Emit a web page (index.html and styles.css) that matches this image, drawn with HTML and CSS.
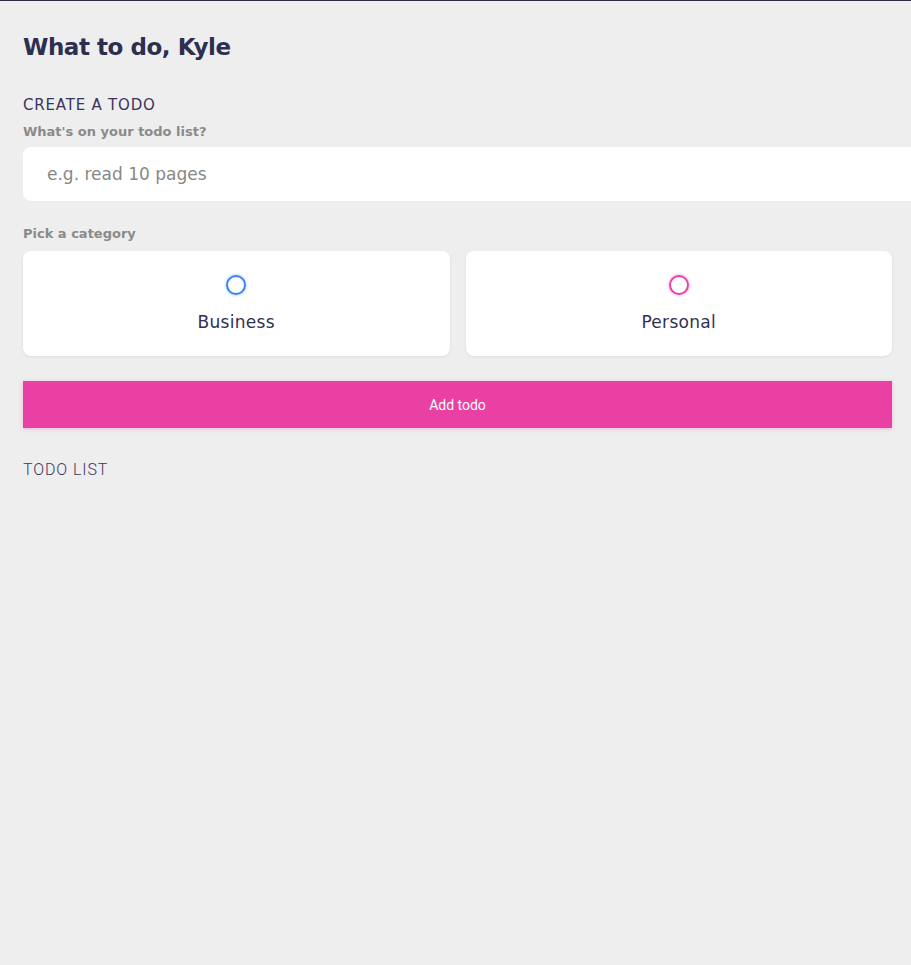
FILE: index.html
```html
<!DOCTYPE html>
<html>
<head>
<meta charset="utf-8">
<link rel="stylesheet" href="styles.css">
</head>
<body>
<main class="app">
  <h1 class="greeting">What to do, Kyle</h1>
  <section class="create">
    <h2 class="section-title">CREATE A TODO</h2>
    <h4 class="label">What's on your todo list?</h4>
    <input class="todo-input" type="text" placeholder="e.g. read 10 pages">
    <h4 class="label label-cat">Pick a category</h4>
    <div class="options">
      <label class="option">
        <span class="bubble business"></span>
        <span class="option-text">Business</span>
      </label>
      <label class="option">
        <span class="bubble personal"></span>
        <span class="option-text">Personal</span>
      </label>
    </div>
    <button class="add-btn">Add todo</button>
  </section>
  <section class="list">
    <h2 class="section-title list-title">TODO LIST</h2>
  </section>
</main>
</body>
</html>
```
FILE: styles.css
```css
html, body {
  margin: 0;
  padding: 0;
  background: #eeeeee;
  height: 100%;
}
body {
  border-top: 1px solid #2b2d42;
  font-family: "DejaVu Sans", sans-serif;
  color: #313154;
  box-sizing: border-box;
}
.app {
  padding: 0 19px 0 23px;
}
.greeting {
  margin: 0;
  padding-top: 31px;
  font-size: 23px;
  line-height: 30px;
  font-weight: 700;
  color: #2d2f4e;
  letter-spacing: -0.45px;
}
.section-title {
  margin: 0;
  font-size: 15px;
  font-weight: 400;
  line-height: 20px;
  color: #3a3560;
}
.create .section-title {
  margin-top: 33px;
  letter-spacing: 0.8px;
}
.label {
  margin: 0;
  margin-top: 9px;
  font-size: 13px;
  line-height: 16px;
  font-weight: 700;
  color: #8a8a8a;
}
.todo-input {
  display: block;
  margin-top: 7px;
  width: 100%;
  height: 54px;
  padding: 0 24px;
  border: none;
  border-radius: 8px;
  background: #fff;
  font-family: "DejaVu Sans", sans-serif;
  font-size: 17px;
  color: #313154;
  outline: none;
}
.todo-input::placeholder {
  color: #888888;
}
.label-cat {
  margin-top: 25px;
}
.options {
  display: grid;
  grid-template-columns: 1fr 1fr;
  gap: 16px;
  margin-top: 9px;
}
.option {
  display: flex;
  flex-direction: column;
  align-items: center;
  height: 105px;
  box-sizing: border-box;
  padding-top: 24px;
  background: #fff;
  border-radius: 8px;
  box-shadow: 0 1px 3px rgba(0,0,0,0.08);
}
.bubble {
  width: 16px;
  height: 16px;
  border-radius: 50%;
  border: 2px solid #3a82f6;
  box-shadow: 0 0 3px rgba(58,130,246,0.6);
}
.bubble.personal {
  border-color: #ea40a4;
  box-shadow: 0 0 3px rgba(234,64,164,0.6);
}
.option-text {
  margin-top: 17px;
  font-size: 17px;
  line-height: 20px;
  letter-spacing: 0.3px;
  color: #313154;
}
.add-btn {
  display: block;
  width: 100%;
  height: 47px;
  margin-top: 25px;
  border: none;
  background: #ea40a4;
  color: #fff;
  font-family: "Roboto", sans-serif;
  font-size: 14px;
  box-shadow: 0 1px 4px rgba(234,64,164,0.3);
  cursor: pointer;
}
.list-title {
  margin-top: 32px;
  font-family: "Roboto", sans-serif;
  font-weight: 300;
  font-size: 16px;
  letter-spacing: 0.9px;
}
```
